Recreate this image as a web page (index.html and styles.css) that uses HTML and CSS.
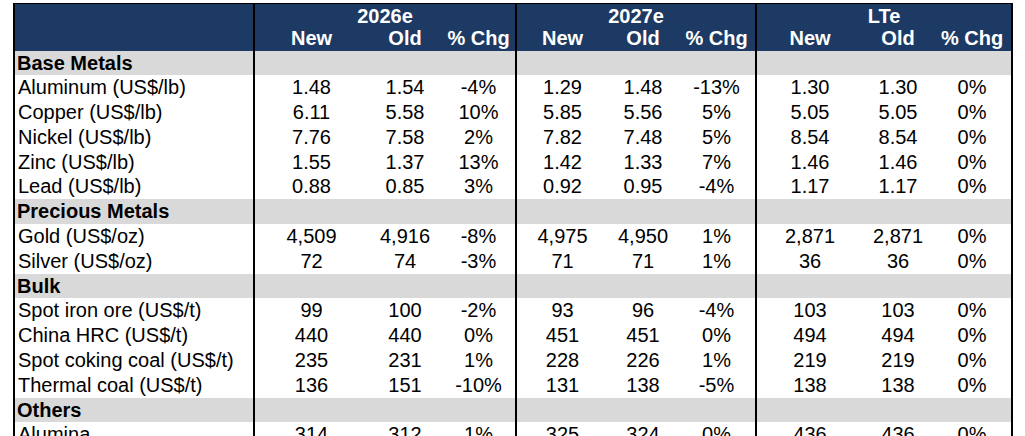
FILE: index.html
```html
<!DOCTYPE html>
<html lang="en">
<head>
<meta charset="utf-8">
<title>Commodity price forecasts</title>
<link rel="stylesheet" href="styles.css">
</head>
<body>
<div class="sheet" role="table">
  <div class="hd corner"></div>
  <div class="hd grp end">2026e</div>
  <div class="hd grp end">2027e</div>
  <div class="hd grp">LTe</div>
  <div class="hd">New</div><div class="hd">Old</div><div class="hd end">% Chg</div>
  <div class="hd">New</div><div class="hd">Old</div><div class="hd end">% Chg</div>
  <div class="hd">New</div><div class="hd">Old</div><div class="hd">% Chg</div>

  <div class="sec lbl">Base Metals</div><div class="sec fill end"></div><div class="sec fill end"></div><div class="sec fill"></div>
  <div class="lbl">Aluminum (US$/lb)</div><div>1.48</div><div>1.54</div><div class="end">-4%</div><div>1.29</div><div>1.48</div><div class="end">-13%</div><div>1.30</div><div>1.30</div><div>0%</div>
  <div class="lbl">Copper (US$/lb)</div><div>6.11</div><div>5.58</div><div class="end">10%</div><div>5.85</div><div>5.56</div><div class="end">5%</div><div>5.05</div><div>5.05</div><div>0%</div>
  <div class="lbl">Nickel (US$/lb)</div><div>7.76</div><div>7.58</div><div class="end">2%</div><div>7.82</div><div>7.48</div><div class="end">5%</div><div>8.54</div><div>8.54</div><div>0%</div>
  <div class="lbl">Zinc (US$/lb)</div><div>1.55</div><div>1.37</div><div class="end">13%</div><div>1.42</div><div>1.33</div><div class="end">7%</div><div>1.46</div><div>1.46</div><div>0%</div>
  <div class="lbl">Lead (US$/lb)</div><div>0.88</div><div>0.85</div><div class="end">3%</div><div>0.92</div><div>0.95</div><div class="end">-4%</div><div>1.17</div><div>1.17</div><div>0%</div>

  <div class="sec lbl">Precious Metals</div><div class="sec fill end"></div><div class="sec fill end"></div><div class="sec fill"></div>
  <div class="lbl">Gold (US$/oz)</div><div>4,509</div><div>4,916</div><div class="end">-8%</div><div>4,975</div><div>4,950</div><div class="end">1%</div><div>2,871</div><div>2,871</div><div>0%</div>
  <div class="lbl">Silver (US$/oz)</div><div>72</div><div>74</div><div class="end">-3%</div><div>71</div><div>71</div><div class="end">1%</div><div>36</div><div>36</div><div>0%</div>

  <div class="sec lbl">Bulk</div><div class="sec fill end"></div><div class="sec fill end"></div><div class="sec fill"></div>
  <div class="lbl">Spot iron ore (US$/t)</div><div>99</div><div>100</div><div class="end">-2%</div><div>93</div><div>96</div><div class="end">-4%</div><div>103</div><div>103</div><div>0%</div>
  <div class="lbl">China HRC (US$/t)</div><div>440</div><div>440</div><div class="end">0%</div><div>451</div><div>451</div><div class="end">0%</div><div>494</div><div>494</div><div>0%</div>
  <div class="lbl">Spot coking coal (US$/t)</div><div>235</div><div>231</div><div class="end">1%</div><div>228</div><div>226</div><div class="end">1%</div><div>219</div><div>219</div><div>0%</div>
  <div class="lbl">Thermal coal (US$/t)</div><div>136</div><div>151</div><div class="end">-10%</div><div>131</div><div>138</div><div class="end">-5%</div><div>138</div><div>138</div><div>0%</div>

  <div class="sec lbl">Others</div><div class="sec fill end"></div><div class="sec fill end"></div><div class="sec fill"></div>
  <div class="lbl">Alumina</div><div>314</div><div>312</div><div class="end">1%</div><div>325</div><div>324</div><div class="end">0%</div><div>436</div><div>436</div><div>0%</div>
</div>
</body>
</html>
```

FILE: styles.css
```css
html, body {
  overflow: hidden;
}

body {
  margin: 3px 0 0 13px;
  background: #ffffff;
  font-family: "Liberation Sans", Arial, sans-serif;
  font-size: 20px;
  color: #000000;
}

.sheet {
  width: 1000px;
  box-sizing: border-box;
  border-left: 2px solid #000000;
  border-right: 2px solid #000000;
  border-top: 1.5px solid #000000;
  display: grid;
  grid-template-columns: 240px 113px 74px 75px 91px 70px 79px 106px 70px 78px;
  grid-template-rows: 23.25px 23.25px;
  grid-auto-rows: 24.8px;
}

.sheet > div {
  box-sizing: border-box;
  text-align: center;
  line-height: 24.8px;
  white-space: nowrap;
}

.sheet > .end,
.sheet > .lbl,
.sheet > .corner {
  border-right: 2px solid #000000;
}

.sheet > .hd {
  background: #1c3a63;
  color: #ffffff;
  font-weight: bold;
  line-height: 23.25px;
}

.sheet > .corner {
  grid-row: span 2;
}

.sheet > .grp {
  grid-column: span 3;
  padding-top: 1px;
}

.sheet > .lbl {
  text-align: left;
  padding-left: 3px;
}

.sheet > .sec {
  background: #d9d9d9;
}

.sheet > .sec.lbl {
  font-weight: bold;
  padding-left: 2px;
}

.sheet > .fill {
  grid-column: span 3;
}
```
